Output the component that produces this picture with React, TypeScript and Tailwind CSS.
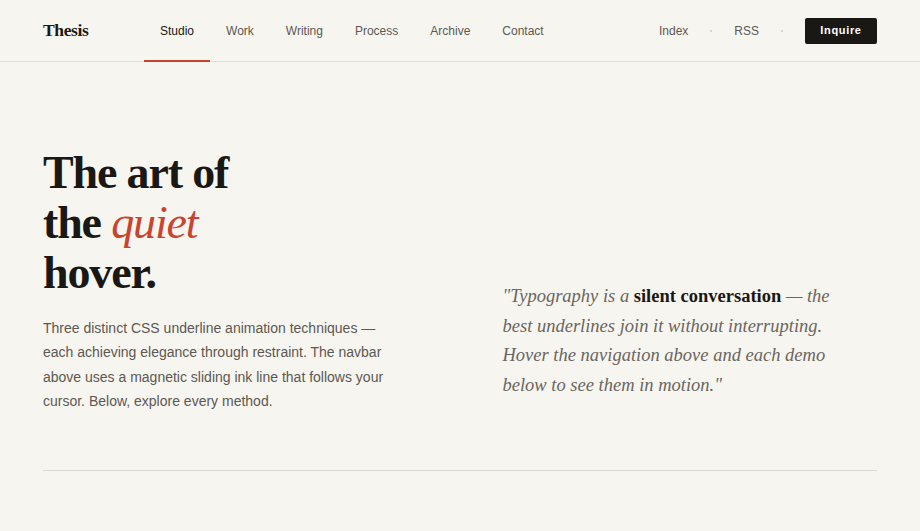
import React from 'react';

const navItems = ['Studio', 'Work', 'Writing', 'Process', 'Archive', 'Contact'];

const Header: React.FC = () => (
  <header className="h-[62px] border-b border-[#e2ded6] px-[43px] flex items-center">
    <div className="font-['Liberation_Serif',serif] font-bold text-[17.5px] tracking-[-0.02em] text-[#1a1814] w-[101px]">
      Thesis
    </div>
    <nav className="flex h-full">
      {navItems.map((item, i) => (
        <a
          key={item}
          className={`relative flex items-center pt-[1px] px-4 text-[12px] ${i === 0 ? 'text-[#1a1814]' : 'text-[#5c5852]'}`}
        >
          {item}
          {i === 0 && <span className="absolute left-0 right-0 -bottom-[1px] h-[2px] bg-[#c9432d]" />}
        </a>
      ))}
    </nav>
    <div className="ml-auto flex items-center text-[12px] text-[#5c5852]">
      <a className="pt-[1px]">Index</a>
      <span className="mx-[22px] w-[2px] h-[2px] rounded-full bg-[#cfcbc3]" />
      <a className="pt-[1px]">RSS</a>
      <span className="mx-[22px] w-[2px] h-[2px] rounded-full bg-[#cfcbc3]" />
      <button className="h-[26px] w-[72px] bg-[#1a1814] text-white text-[11px] font-bold tracking-[0.06em] rounded-[2px]">
        Inquire
      </button>
    </div>
  </header>
);

const Hero: React.FC = () => (
  <section className="px-[43px]">
    <div className="pt-[86px] pb-[57px] border-b border-[#dcd8d0] grid grid-cols-2 gap-x-[85px] items-end">
      <div>
        <h1 className="font-['Liberation_Serif',serif] font-bold text-[46px] leading-[50px] tracking-[-0.025em] text-[#1a1814]">
          The art of
          <br />
          the <em className="font-normal text-[#c9432d]">quiet</em>
          <br />
          hover.
        </h1>
        <p className="mt-[18px] max-w-[356px] text-[14px] leading-[24.3px] text-[#5c5852]">
          Three distinct CSS underline animation techniques — each achieving elegance through restraint. The navbar
          above uses a magnetic sliding ink line that follows your cursor. Below, explore every method.
        </p>
      </div>
      <blockquote className="pb-[13px] max-w-[350px] font-['Liberation_Serif',serif] italic text-[18.5px] leading-[29.5px] text-[#6b665f]">
        "Typography is a <strong className="not-italic font-bold text-[#1a1814]">silent conversation</strong> — the
        best underlines join it without interrupting. Hover the navigation above and each demo below to see them in
        motion."
      </blockquote>
    </div>
  </section>
);

export default function App() {
  return (
    <div className="min-h-screen bg-[#f7f5f0] font-['Liberation_Sans',Arial,sans-serif]">
      <Header />
      <Hero />
    </div>
  );
}
